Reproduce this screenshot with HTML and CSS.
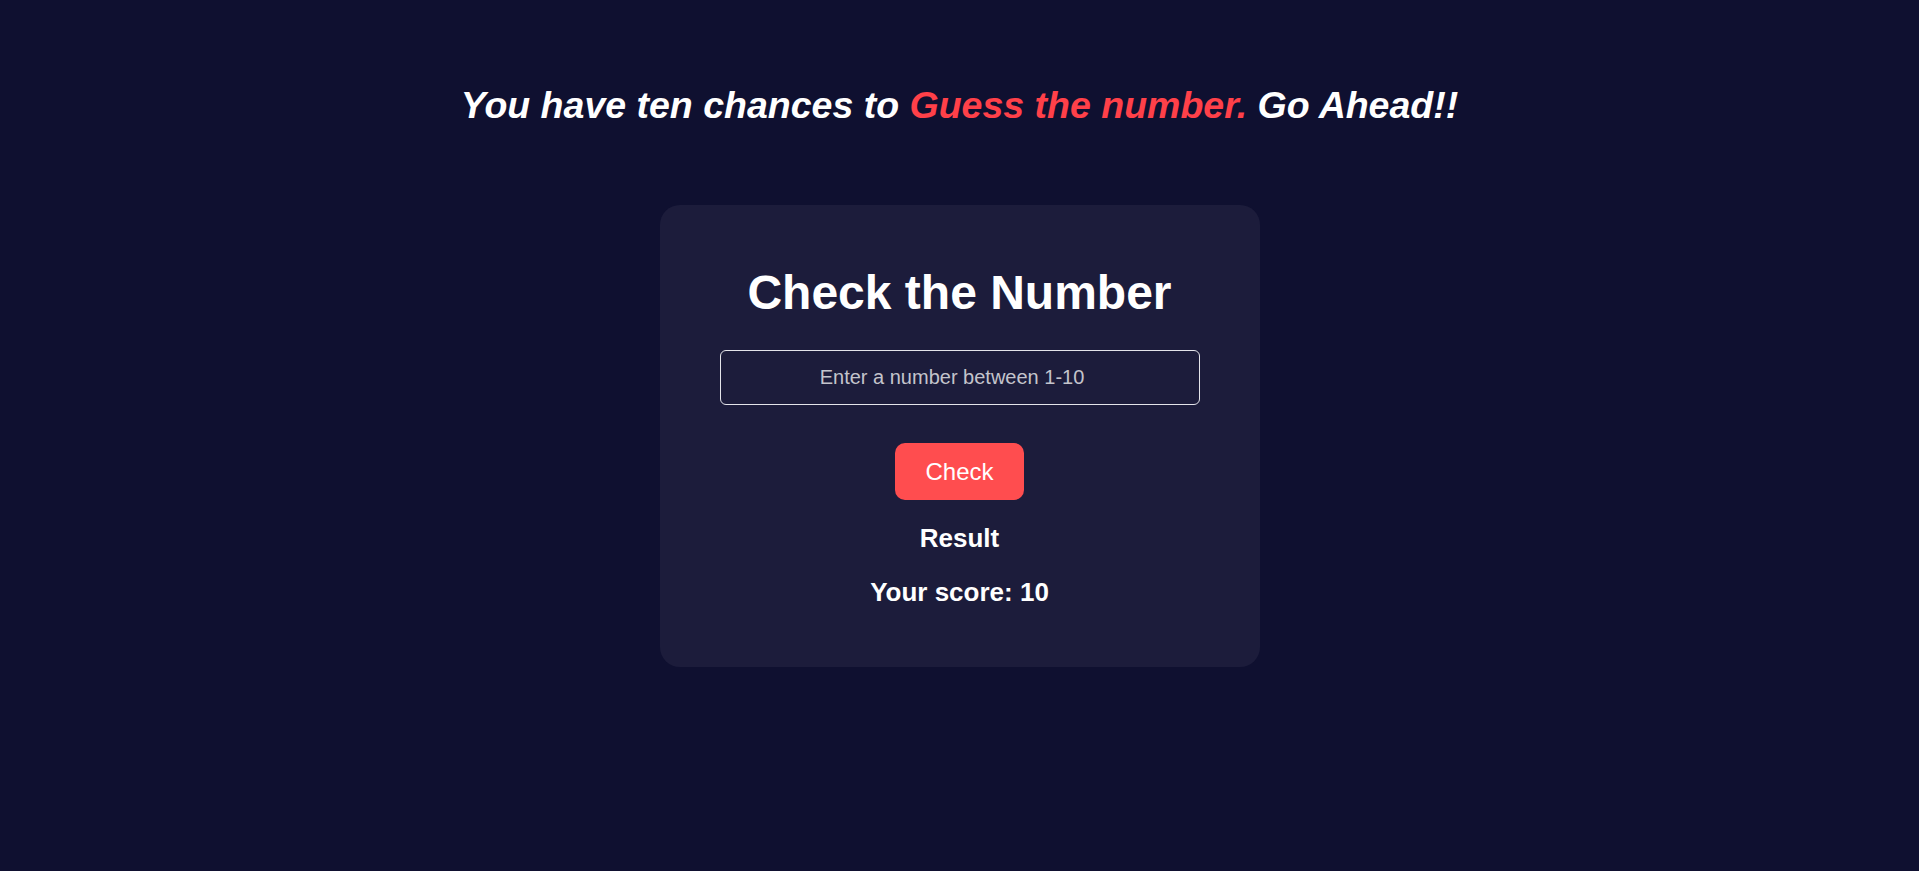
FILE: index.html
```html
<!DOCTYPE html>
<html lang="en">
<head>
<meta charset="utf-8">
<title>Guess the number</title>
<link rel="stylesheet" href="styles.css">
</head>
<body>
  <main class="page">
    <h2 class="intro">You have ten chances to <span class="accent">Guess the number.</span> Go Ahead!!</h2>
    <section class="card">
      <h1 class="card-title">Check the Number</h1>
      <input class="guess-input" type="number" placeholder="Enter a number between 1-10">
      <button class="check-btn" type="button">Check</button>
      <p class="result">Result</p>
      <p class="score">Your score: 10</p>
    </section>
  </main>
</body>
</html>
```

FILE: styles.css
```css
* { box-sizing: border-box; }

html, body {
  margin: 0;
  padding: 0;
  height: 100%;
}

body {
  background: #0f1030;
  font-family: "Liberation Sans", Arial, sans-serif;
  color: #ffffff;
}

.page {
  display: flex;
  flex-direction: column;
  align-items: center;
  padding-top: 84px;
}

.intro {
  margin: 0;
  font-size: 37.5px;
  font-weight: bold;
  font-style: italic;
  line-height: 43px;
  color: #ffffff;
}

.accent {
  color: #ff4049;
}

.card {
  margin-top: 78px;
  width: 600px;
  height: 462px;
  padding: 40px 60px;
  background: #1c1c3b;
  border-radius: 20px;
  display: flex;
  flex-direction: column;
  align-items: center;
}

.card-title {
  margin: 20px 0 30px;
  font-size: 48px;
  font-weight: bold;
  line-height: 55px;
}

.guess-input {
  width: 100%;
  height: 55px;
  padding: 0 10px;
  border: 1px solid #e4e4ea;
  border-radius: 6px;
  background: transparent;
  color: #ffffff;
  font-family: "Liberation Sans", Arial, sans-serif;
  font-size: 20px;
  text-align: center;
  outline: none;
}

.guess-input::placeholder {
  color: #c4c4cc;
}

.check-btn {
  margin-top: 38px;
  padding: 15px 30px;
  border: none;
  border-radius: 10px;
  background: #ff4d4f;
  color: #ffffff;
  font-family: "Liberation Sans", Arial, sans-serif;
  font-size: 24px;
  line-height: 27px;
  cursor: pointer;
}

.result,
.score {
  margin: 0;
  font-size: 26px;
  font-weight: bold;
  line-height: 30px;
}

.result {
  margin-top: 23px;
}

.score {
  margin-top: 24px;
}
```
